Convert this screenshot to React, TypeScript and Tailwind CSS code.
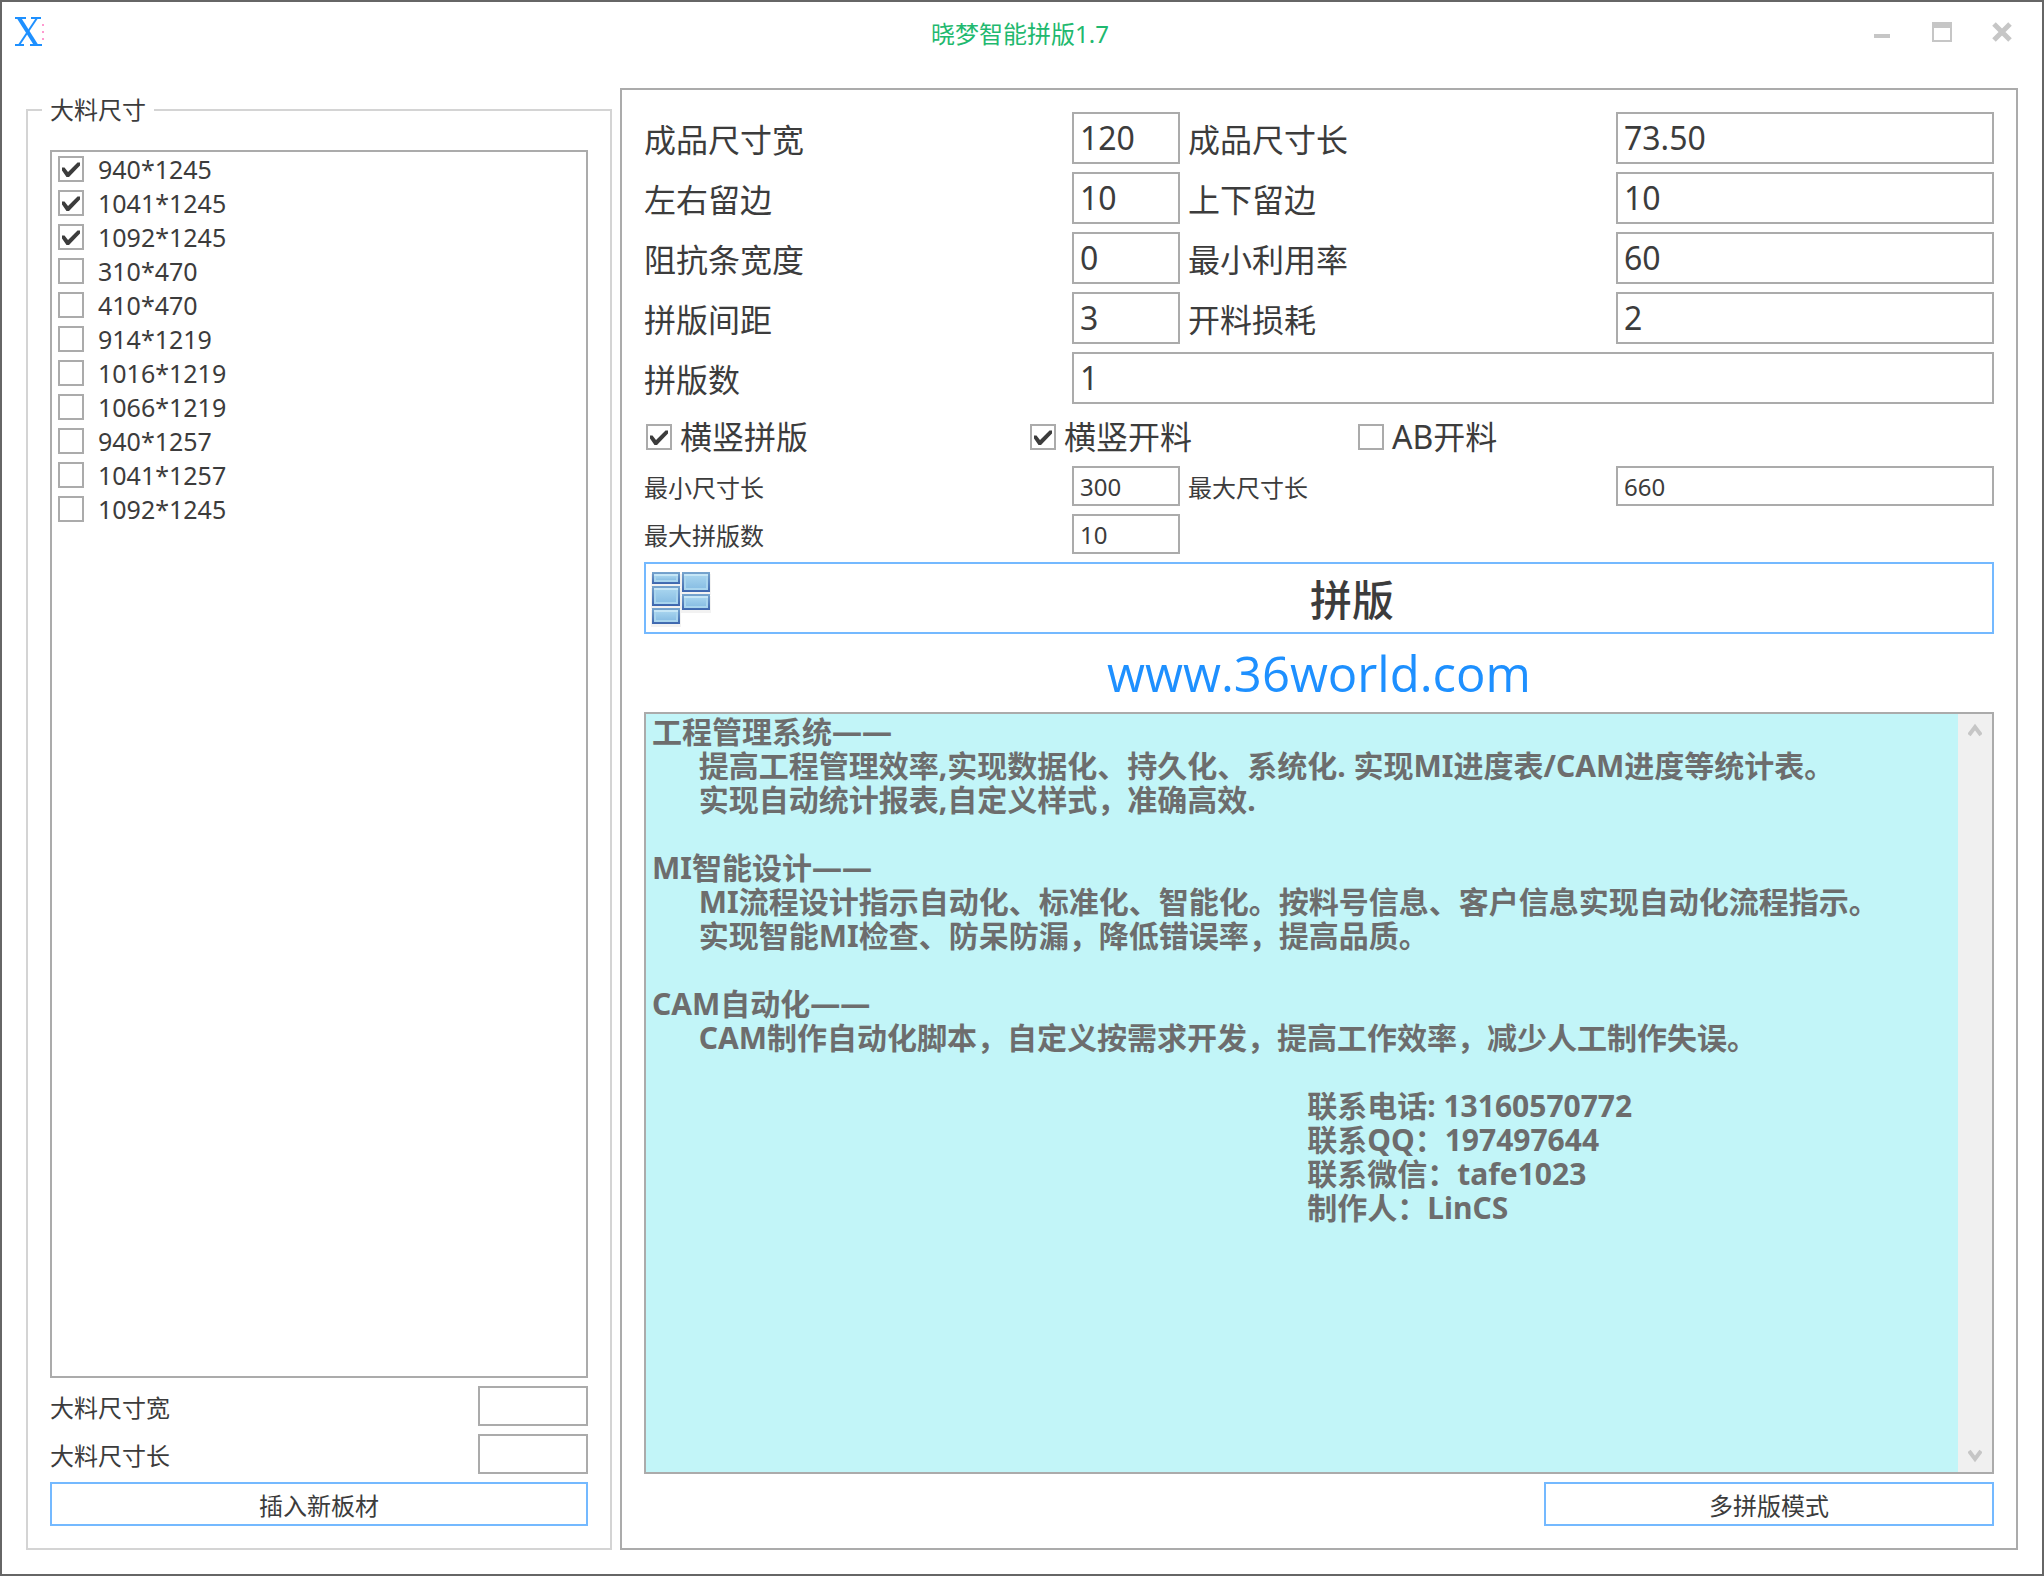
import React, { useState } from "react";

const SHEETS = [
  { size: "940*1245", on: true },
  { size: "1041*1245", on: true },
  { size: "1092*1245", on: true },
  { size: "310*470", on: false },
  { size: "410*470", on: false },
  { size: "914*1219", on: false },
  { size: "1016*1219", on: false },
  { size: "1066*1219", on: false },
  { size: "940*1257", on: false },
  { size: "1041*1257", on: false },
  { size: "1092*1245", on: false },
];

const INDENT = " ".repeat(6);
const CONTACT = " ".repeat(84);

const NOTES = [
  "工程管理系统——",
  INDENT + "提高工程管理效率,实现数据化、持久化、系统化. 实现MI进度表/CAM进度等统计表。",
  INDENT + "实现自动统计报表,自定义样式，准确高效.",
  "",
  "MI智能设计——",
  INDENT + "MI流程设计指示自动化、标准化、智能化。按料号信息、客户信息实现自动化流程指示。",
  INDENT + "实现智能MI检查、防呆防漏，降低错误率，提高品质。",
  "",
  "CAM自动化——",
  INDENT + "CAM制作自动化脚本，自定义按需求开发，提高工作效率，减少人工制作失误。",
  "",
  CONTACT + "联系电话: 13160570772",
  CONTACT + "联系QQ：197497644",
  CONTACT + "联系微信：tafe1023",
  CONTACT + "制作人：LinCS",
].join("\n");

function Check({ id, on }: { id: string; on: boolean }) {
  const [checked, setChecked] = useState(on);
  return (
    <span className="relative block size-[26px] shrink-0">
      <input
        id={id}
        type="checkbox"
        checked={checked}
        onChange={(e) => setChecked(e.target.checked)}
        className="block size-full appearance-none border-2 border-[#ababab] bg-white"
      />
      {checked && (
        <svg viewBox="0 0 26 26" className="pointer-events-none absolute inset-0 size-full">
          <path d="M4 11.5 L6.5 11.5 L10 16 L19.5 6.5 L22 6.5 L22 9.5 L11 21 L8.5 21 L4 14.5 Z" fill="#3c3c3c" />
        </svg>
      )}
    </span>
  );
}

function Field({
  id,
  label,
  value,
  small,
  wide,
}: {
  id: string;
  label: string;
  value: string;
  small?: boolean;
  wide?: boolean;
}) {
  return (
    <>
      <label htmlFor={id} className={small ? "pt-1 text-[24px] leading-9" : "pt-1 text-[32px] leading-12"}>
        {label}
      </label>
      <input
        id={id}
        type="text"
        defaultValue={value}
        className={
          (small ? "h-10 text-[24px] " : "h-[52px] pb-0.5 text-[32px] ") +
          (wide ? "col-span-3 " : "") +
          "w-full min-w-0 border-2 border-[#ababab] bg-white px-1.5"
        }
      />
    </>
  );
}

const BLOCKS = [
  { x: 0, y: 0, h: 12 },
  { x: 30, y: 0, h: 20 },
  { x: 0, y: 14, h: 20 },
  { x: 30, y: 22, h: 16 },
  { x: 0, y: 36, h: 16 },
];

function BlocksIcon() {
  return (
    <svg viewBox="0 0 60 52" className="h-[52px] w-[60px] shrink-0 overflow-visible" aria-hidden="true">
      <defs>
        <linearGradient id="edge" x1="0" y1="0" x2="0" y2="1">
          <stop offset="0" stopColor="#78a6cf" />
          <stop offset="1" stopColor="#3d66ae" />
        </linearGradient>
        <linearGradient id="face" x1="0" y1="0" x2="0" y2="1">
          <stop offset="0" stopColor="#a5d3ee" />
          <stop offset="1" stopColor="#8abfe4" />
        </linearGradient>
      </defs>
      {BLOCKS.map((b) => (
        <g key={`${b.x}-${b.y}`}>
          <rect x={b.x - 1} y={b.y + 2} width="30" height={b.h + 1} fill="#000" opacity="0.05" />
          <rect x={b.x} y={b.y} width="28" height={b.h} fill="url(#edge)" />
          <rect x={b.x + 2} y={b.y + 2} width="24" height={b.h - 4} fill="#a9d5ee" />
          <rect x={b.x + 2} y={b.y + 2} width="24" height="2" fill="#c6e6f6" />
          <rect x={b.x + 4} y={b.y + 4} width="20" height={b.h - 8} fill="url(#face)" />
        </g>
      ))}
    </svg>
  );
}

export default function App() {
  return (
    <div className="flex min-h-screen flex-col border-2 border-[#666] bg-white font-['Noto_Sans','Noto_Sans_CJK_SC',sans-serif] text-[#3c3c3c]">
      <header className="grid h-[86px] shrink-0 grid-cols-[1fr_auto_1fr] items-start">
        <svg viewBox="0 0 32 32" className="mt-[14px] ml-3 size-8" aria-hidden="true">
          <path d="M1 2H12M17 2H27M1 29H10M16 29H28" stroke="#1e90ff" strokeWidth="2" />
          <path d="M5 2L22 29" stroke="#1e90ff" strokeWidth="4" />
          <path d="M23 2L5 29" stroke="#1e90ff" strokeWidth="2" />
          <path d="M29 8V10M29 15V17M29 22V24" stroke="#ff9ad0" strokeWidth="2" />
        </svg>
        <h1 className="pt-3.5 pr-1 text-[24px] leading-9 text-[#1fb96f]">晓梦智能拼版1.7</h1>
        <div className="flex justify-self-end pr-2.5">
          <button type="button" aria-label="最小化" className="flex h-[60px] w-[60px] justify-center">
            <svg viewBox="0 0 20 26" className="mt-[18px] h-[26px] w-5">
              <rect x="2" y="14" width="16" height="4" fill="#c6c6c6" />
            </svg>
          </button>
          <button type="button" aria-label="最大化" className="flex h-[60px] w-[60px] justify-center">
            <svg viewBox="0 0 20 26" className="mt-[18px] h-[26px] w-5">
              <path d="M0 2H20V22H0ZM2 8V20H18V8Z" fillRule="evenodd" fill="#c6c6c6" />
            </svg>
          </button>
          <button type="button" aria-label="关闭" className="flex h-[60px] w-[60px] justify-center">
            <svg viewBox="0 0 20 26" className="mt-[18px] h-[26px] w-5">
              <path d="M2 4L18 20M18 4L2 20" stroke="#c6c6c6" strokeWidth="5" />
            </svg>
          </button>
        </div>
      </header>

      <main className="flex flex-1 gap-2 px-6 pb-6">
        <fieldset className="mt-1 flex w-[30%] max-w-[586px] min-w-0 flex-col border-2 border-[#d4d4d4] px-[22px] pb-[22px]">
          <legend className="-ml-2 px-2 text-[24px] leading-9">大料尺寸</legend>
          <div className="mt-[22px] flex min-h-[1228px] flex-1 flex-col gap-2 border-2 border-[#ababab] px-1.5 pt-1">
            {SHEETS.map((s, i) => (
              <label key={i} htmlFor={`sheet-${i}`} className="flex h-[26px] items-center gap-3.5 text-[25px] leading-[26px]">
                <Check id={`sheet-${i}`} on={s.on} />
                {s.size}
              </label>
            ))}
          </div>
          <div className="mt-2 grid grid-cols-[1fr_110px] gap-y-2">
            <Field id="stock-w" label="大料尺寸宽" value="" small />
            <Field id="stock-l" label="大料尺寸长" value="" small />
          </div>
          <button type="button" className="mt-2 h-11 border-2 border-[#74b9ff] bg-white pt-1 text-[24px] leading-9">
            插入新板材
          </button>
        </fieldset>

        <section className="flex min-w-0 flex-1 flex-col border-2 border-[#ababab] p-[22px]">
          <div className="grid grid-cols-[420fr_108fr_420fr_378fr] gap-2">
            <Field id="pw" label="成品尺寸宽" value="120" />
            <Field id="pl" label="成品尺寸长" value="73.50" />
            <Field id="mx" label="左右留边" value="10" />
            <Field id="my" label="上下留边" value="10" />
            <Field id="strip" label="阻抗条宽度" value="0" />
            <Field id="usage" label="最小利用率" value="60" />
            <Field id="gap" label="拼版间距" value="3" />
            <Field id="loss" label="开料损耗" value="2" />
            <Field id="count" label="拼版数" value="1" wide />
          </div>

          <div className="mt-1 grid h-[58px] grid-cols-[384fr_328fr_636fr] items-center pl-0.5 text-[32px] leading-12">
            <label htmlFor="o1" className="flex items-center gap-2">
              <Check id="o1" on />
              横竖拼版
            </label>
            <label htmlFor="o2" className="flex items-center gap-2">
              <Check id="o2" on />
              横竖开料
            </label>
            <label htmlFor="o3" className="flex items-center gap-2">
              <Check id="o3" on={false} />
              AB开料
            </label>
          </div>

          <div className="grid grid-cols-[420fr_108fr_420fr_378fr] gap-2">
            <Field id="min-l" label="最小尺寸长" value="300" small />
            <Field id="max-l" label="最大尺寸长" value="660" small />
            <Field id="max-n" label="最大拼版数" value="10" small />
          </div>

          <button type="button" className="mt-2 flex h-[72px] items-center border-2 border-[#74b9ff] bg-white pl-1.5">
            <BlocksIcon />
            <span className="flex-1 pt-1 text-center text-[42px] leading-[64px] font-medium">拼版</span>
          </button>

          <a
            href="http://www.36world.com"
            className="mt-2 h-[70px] text-center font-['Open_Sans',sans-serif] text-[49px] leading-[62px] text-[#1e90ff]"
          >
            www.36world.com
          </a>

          <div className="flex min-h-[762px] flex-1 border-2 border-[#ababab] bg-[#c2f5f8]">
            <textarea
              readOnly
              aria-label="说明"
              defaultValue={NOTES}
              className="min-w-0 flex-1 resize-none overflow-hidden pt-px pl-1.5 text-[30px] leading-[34px] font-bold whitespace-pre text-[#6d6d6d] outline-none"
            />
            <div className="flex w-[34px] shrink-0 flex-col justify-between bg-[#f0f0f0]">
              <button type="button" aria-label="向上滚动" className="flex h-8 items-center justify-center">
                <svg viewBox="0 0 14 14" className="size-3.5">
                  <path d="M1 12L7 4L13 12" fill="none" stroke="#c6c6c6" strokeWidth="4" />
                </svg>
              </button>
              <button type="button" aria-label="向下滚动" className="flex h-8 items-center justify-center">
                <svg viewBox="0 0 14 14" className="size-3.5">
                  <path d="M1 2L7 10L13 2" fill="none" stroke="#c6c6c6" strokeWidth="4" />
                </svg>
              </button>
            </div>
          </div>

          <button type="button" className="mt-2 h-11 w-1/3 self-end border-2 border-[#74b9ff] bg-white pt-1 text-[24px] leading-9">
            多拼版模式
          </button>
        </section>
      </main>
    </div>
  );
}
